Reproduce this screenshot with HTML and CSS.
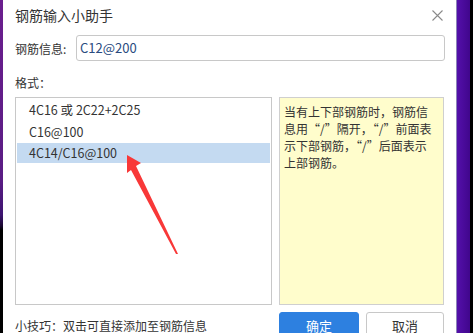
FILE: index.html
```html
<!DOCTYPE html>
<html lang="zh">
<head>
<meta charset="utf-8">
<link rel="stylesheet" href="styles.css">
</head>
<body>
<div class="screen">
  <div class="edge-left"></div>
  <div class="dialog">
    <div class="header">
      <span class="title">钢筋输入小助手</span>
      <svg class="close" width="11" height="11" viewBox="0 0 11 11"><path d="M0.5 0.5 L10.5 10.5 M10.5 0.5 L0.5 10.5" stroke="#8a8a8a" stroke-width="1.1" fill="none"/></svg>
    </div>
    <div class="field">
      <span class="label">钢筋信息:</span>
      <div class="input">C12@200</div>
    </div>
    <div class="fmt">格式：</div>
    <div class="panels">
      <ul class="list">
        <li class="item">4C16 或 2C22+2C25</li>
        <li class="item">C16@100</li>
        <li class="item selected">4C14/C16@100</li>
      </ul>
      <div class="note">
        <span class="line">当有上下部钢筋时，钢筋信</span>
        <span class="line">息用“/”隔开，“/”前面表</span>
        <span class="line">示下部钢筋，“/”后面表示</span>
        <span class="line">上部钢筋。</span>
      </div>
    </div>
    <div class="footer">
      <span class="tip">小技巧：双击可直接添加至钢筋信息</span>
      <div class="buttons">
        <div class="btn primary">确定</div>
        <div class="btn">取消</div>
      </div>
    </div>
    <svg class="arrow" width="60" height="105" viewBox="122 150 60 105">
      <polygon points="127,155 141,163 136,166 178,254 176,254 131,170 127,173" fill="#f83838"/>
    </svg>
  </div>
  <div class="edge-right"></div>
</div>
</body>
</html>
```

FILE: styles.css
```css
html, body {
  margin: 0;
  padding: 0;
  background: #000;
}
body {
  font-family: "Noto Sans CJK SC", "Microsoft YaHei", sans-serif;
  color: #333;
  font-size: 12px;
}
.screen {
  display: flex;
  width: 473px;
  height: 333px;
  overflow: hidden;
}
.edge-left {
  flex: none;
  width: 3px;
  height: 333px;
  background: linear-gradient(to bottom, #6b1e8e 0px, #5a1c84 180px, #3d1470 215px, #1a0830 226px, #000 230px, #000 333px);
}
.dialog {
  flex: none;
  position: relative;
  width: 453px;
  height: 333px;
  overflow: hidden;
  box-sizing: border-box;
  padding: 0 11px 0 12px;
  background: #fff;
  display: flex;
  flex-direction: column;
}
.dialog > * {
  flex: none;
}
.edge-right {
  flex: none;
  width: 14px;
  height: 333px;
  border-left: 1px solid #8c84b8;
  box-sizing: border-box;
  background: linear-gradient(to right, #5410aa, #40068c);
}
.header {
  height: 30px;
  display: flex;
  align-items: center;
  justify-content: space-between;
}
.title {
  font-size: 14px;
  line-height: 20px;
  color: #333;
}
.close {
  margin-right: 2px;
}
.field {
  margin-top: 5px;
  height: 26px;
  display: flex;
  align-items: center;
}
.label {
  width: 61px;
  flex: none;
  line-height: 17px;
}
.input {
  flex: 1;
  height: 26px;
  box-sizing: border-box;
  border: 1px solid #c8c8c8;
  border-radius: 3px;
  padding: 0 0 0 3px;
  line-height: 24px;
  font-size: 13px;
  color: #2a4b80;
}
.fmt {
  height: 36px;
  box-sizing: border-box;
  padding-top: 13px;
  line-height: 17px;
}
.panels {
  display: grid;
  grid-template-columns: 257px 165px;
  column-gap: 7px;
  height: 208px;
}
.list {
  margin: 0;
  padding: 1px 1px;
  list-style: none;
  border: 1px solid #c8c8c8;
  box-sizing: border-box;
  height: 208px;
}
.item {
  height: 22px;
  line-height: 22px;
  padding-left: 12px;
  font-size: 12.5px;
  color: #333;
}
.item.selected {
  background: #c4daf1;
  height: 20px;
  line-height: 20px;
}
.note {
  background: #fffdcc;
  border: 1px solid #cfcfcf;
  box-sizing: border-box;
  height: 208px;
  padding: 5px 0 0 4px;
  display: flex;
  flex-direction: column;
}
.line {
  display: block;
  white-space: nowrap;
  line-height: 17px;
  font-size: 12px;
  color: #333;
}
.footer {
  margin-top: 7px;
  height: 28px;
  display: flex;
  align-items: center;
  justify-content: space-between;
}
.tip {
  line-height: 17px;
  margin-top: -2px;
}
.buttons {
  display: flex;
  gap: 7px;
  margin-right: 1px;
}
.btn {
  width: 78px;
  height: 28px;
  box-sizing: border-box;
  border: 1px solid #c8c8c8;
  border-radius: 3px;
  background: #fff;
  text-align: center;
  line-height: 26px;
  font-size: 13px;
  color: #333;
}
.btn.primary {
  width: 80px;
  background: #2d80e0;
  border-color: #2d80e0;
  color: #fff;
}
.arrow {
  position: absolute;
  left: 119px;
  top: 150px;
}
```
